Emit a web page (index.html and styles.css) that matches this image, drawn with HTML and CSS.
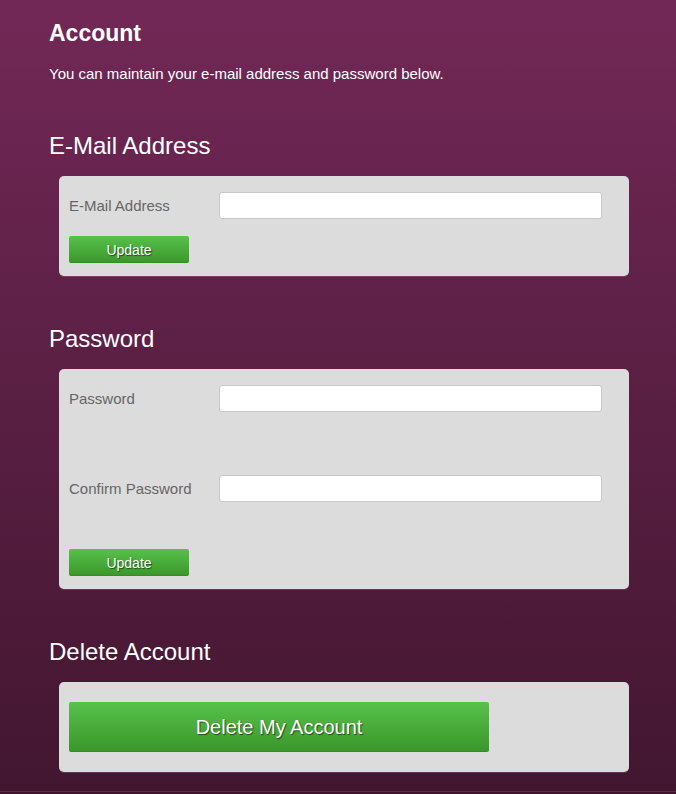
FILE: index.html
```html
<!DOCTYPE html>
<html>
<head>
<meta charset="utf-8">
<link rel="stylesheet" href="styles.css">
</head>
<body>
<div class="page">
  <h1 class="title">Account</h1>
  <p class="intro">You can maintain your e-mail address and password below.</p>

  <h2 class="section-title">E-Mail Address</h2>
  <div class="panel">
    <div class="row">
      <label class="label">E-Mail Address</label>
      <input class="field" type="text">
    </div>
    <button class="btn btn-update">Update</button>
  </div>

  <h2 class="section-title">Password</h2>
  <div class="panel">
    <div class="row">
      <label class="label">Password</label>
      <input class="field" type="password">
    </div>
    <div class="row row-second">
      <label class="label">Confirm Password</label>
      <input class="field" type="password">
    </div>
    <button class="btn btn-update btn-update-pw">Update</button>
  </div>

  <h2 class="section-title">Delete Account</h2>
  <div class="panel panel-delete">
    <button class="btn btn-delete">Delete My Account</button>
  </div>
</div>
</body>
</html>
```

FILE: styles.css
```css
html, body {
  margin: 0;
  padding: 0;
  background: #3f152e;
}

body {
  font-family: "Liberation Sans", Arial, sans-serif;
  width: 676px;
  height: 794px;
  overflow: hidden;
}

.page {
  box-sizing: border-box;
  height: 792px;
  padding: 19px 0 0 49px;
  background: linear-gradient(#722856 0%, #5c2045 45%, #421630 100%);
  border-bottom: 1px solid #5f2b4d;
  color: #fff;
}

.title {
  margin: 0;
  font-size: 23px;
  line-height: 28px;
  font-weight: bold;
}

.intro {
  margin: 18px 0 0;
  font-size: 15px;
  line-height: 18px;
}

.section-title {
  margin: 49px 0 0;
  font-size: 24px;
  line-height: 28px;
  font-weight: normal;
}

.panel {
  margin: 16px 0 0 10px;
  width: 570px;
  box-sizing: border-box;
  padding: 16px 10px 13px;
  background: #dcdcdc;
  border-radius: 5px;
  box-shadow: 0 1px 0 rgba(255, 255, 255, 0.15);
}

.row {
  display: flex;
  align-items: center;
  height: 27px;
}

.row-second {
  margin-top: 63px;
}

.label {
  width: 150px;
  font-size: 15px;
  color: #666;
}

.field {
  box-sizing: border-box;
  width: 383px;
  height: 27px;
  margin: 0;
  padding: 2px 6px;
  background: #fff;
  border: 1px solid #c8c8c8;
  border-radius: 3px;
  outline: none;
}

.btn {
  display: block;
  box-sizing: border-box;
  margin: 0;
  padding: 0;
  border: 0;
  border-radius: 2px;
  background: linear-gradient(#57c14a, #3a972a);
  box-shadow: inset 0 -1px 0 rgba(0, 0, 0, 0.08);
  color: #fff;
  font-family: "Liberation Sans", Arial, sans-serif;
  text-shadow: 1px 1px 1px rgba(0, 0, 0, 0.55);
  cursor: pointer;
}

.btn-update {
  width: 120px;
  height: 27px;
  margin-top: 17px;
  font-size: 14px;
}

.btn-update-pw {
  margin-top: 47px;
}

.panel-delete {
  padding: 20px 10px;
}

.btn-delete {
  width: 420px;
  height: 50px;
  font-size: 20px;
}
```
